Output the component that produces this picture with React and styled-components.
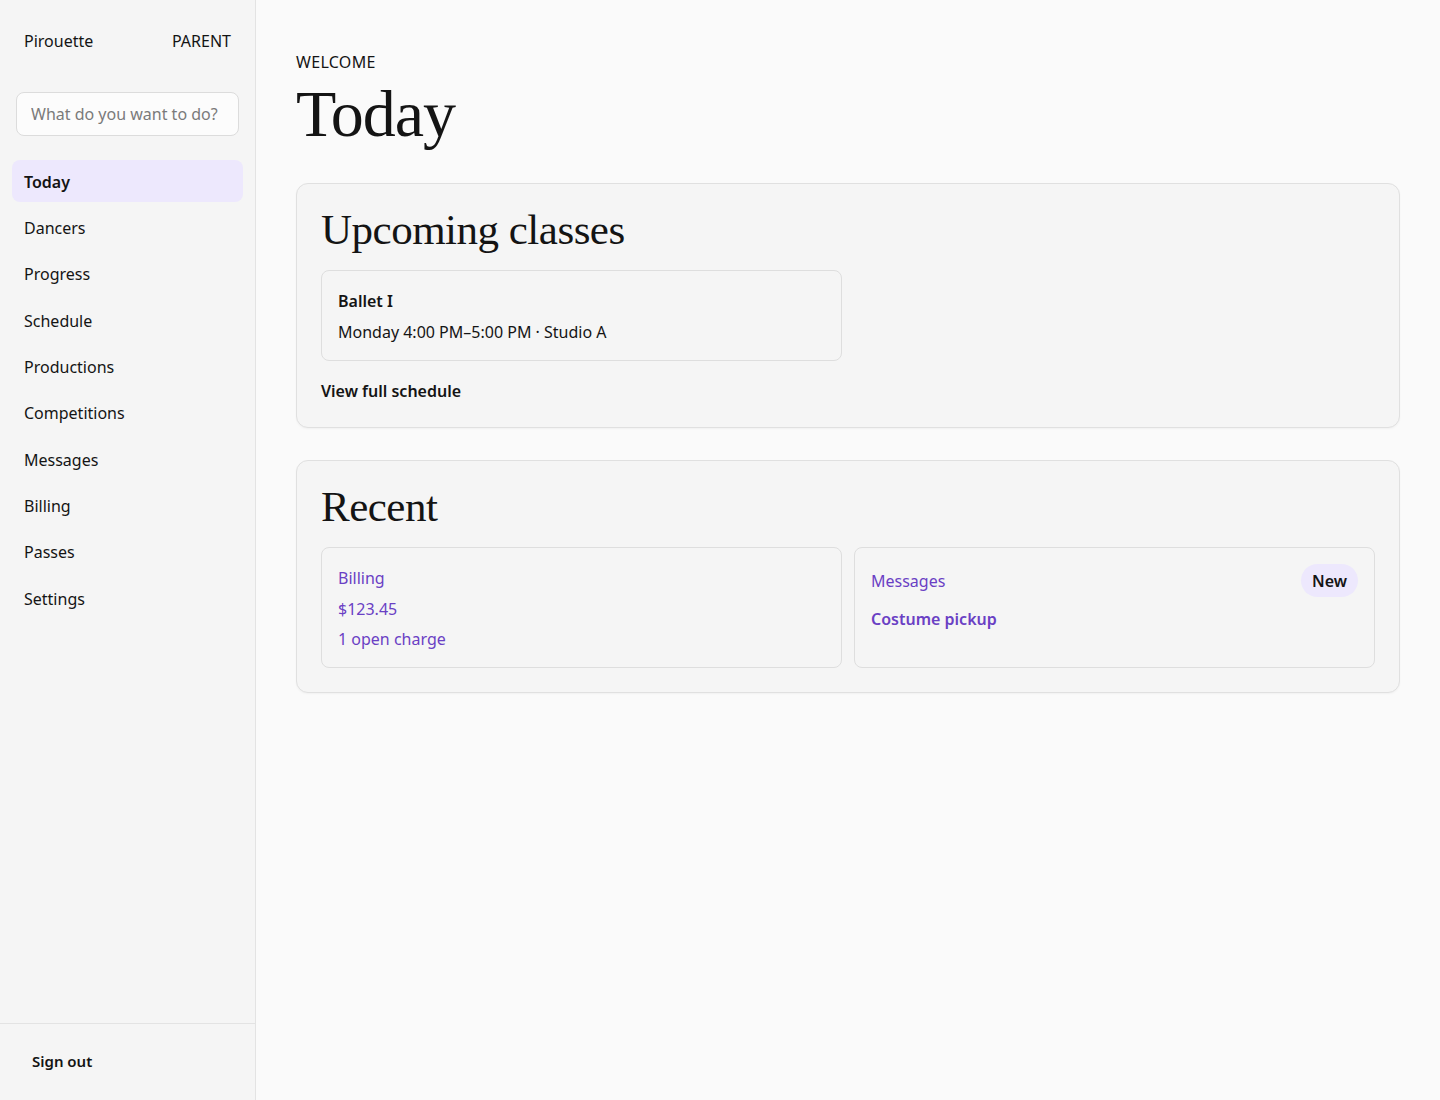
import React from "react";
import styled, { createGlobalStyle } from "styled-components";

const Global = createGlobalStyle`
  html, body { margin: 0; padding: 0; }
  body {
    font-family: "Noto Sans", "Open Sans", sans-serif;
    color: #141414;
    background: #fafafa;
  }
  * { box-sizing: border-box; }
`;

const Shell = styled.div`
  display: flex;
  min-height: 1100px;
`;

const Sidebar = styled.aside`
  width: 256px;
  flex-shrink: 0;
  background: #f5f5f5;
  border-right: 1px solid #e3e3e3;
  display: flex;
  flex-direction: column;
`;

const SideTop = styled.div`
  flex: 1;
  padding: 29px 12px 0;
`;

const Brand = styled.div`
  display: flex;
  justify-content: space-between;
  align-items: center;
  padding: 0 12px;
  font-size: 16px;
  line-height: 24px;
`;

const Search = styled.input`
  display: block;
  width: 223px;
  height: 44px;
  margin: 39px 0 24px 4px;
  padding: 0 14px;
  border: 1px solid #dcdcdc;
  border-radius: 8px;
  background: #fcfcfc;
  font-family: inherit;
  font-size: 16px;
  color: #141414;
  &::placeholder { color: #7a7a7a; }
`;

const Nav = styled.nav`
  display: flex;
  flex-direction: column;
  gap: 4px;
`;

const NavItem = styled.a`
  display: flex;
  align-items: center;
  height: 42.33px;
  padding: 1px 12px 0;
  border-radius: 8px;
  font-size: 16px;
  color: #141414;
  text-decoration: none;
  font-weight: ${(p) => (p.$active ? 600 : 400)};
  background: ${(p) => (p.$active ? "#ede8fd" : "transparent")};
`;

const SideFoot = styled.div`
  border-top: 1px solid #e3e3e3;
  padding: 26px 32px 28px;
  font-size: 15px;
  font-weight: 600;
  line-height: 22px;
`;

const Main = styled.main`
  flex: 1;
  padding: 50px 40px 40px;
`;

const Eyebrow = styled.div`
  font-size: 16px;
  letter-spacing: 0.3px;
  line-height: 24px;
`;

const Title = styled.h1`
  margin: 4px 0 33px;
  font-family: "Liberation Serif", "Times New Roman", serif;
  font-weight: 400;
  font-size: 66px;
  line-height: 72px;
  letter-spacing: -1px;
  color: #141414;
`;

const Card = styled.section`
  background: #f5f5f5;
  border: 1px solid #e0e0e0;
  border-radius: 12px;
  padding: 21px 24px 24px;
  margin-bottom: 32px;
  box-shadow: 0 1px 2px rgba(0, 0, 0, 0.04);
`;

const CardTitle = styled.h2`
  margin: 0 0 15px;
  font-family: "Liberation Serif", "Times New Roman", serif;
  font-weight: 400;
  font-size: 43px;
  line-height: 50px;
  letter-spacing: -0.5px;
  color: #141414;
`;

const Grid = styled.div`
  display: grid;
  grid-template-columns: 1fr 1fr;
  gap: 12px;
`;

const Tile = styled.div`
  border: 1px solid #dedede;
  border-radius: 8px;
  padding: ${(p) => p.$pad || "16px"};
  min-height: ${(p) => p.$h || "auto"};
  display: flex;
  flex-direction: column;
  gap: ${(p) => p.$gap || "6px"};
`;

const Strong = styled.div`
  font-weight: 600;
  font-size: 16px;
  line-height: 24px;
`;

const Text = styled.div`
  font-size: 16px;
  line-height: 24px;
  color: ${(p) => p.$color || "#141414"};
  font-weight: ${(p) => p.$w || 400};
`;

const LinkText = styled.a`
  display: inline-block;
  margin-top: 18px;
  font-size: 16px;
  font-weight: 600;
  line-height: 24px;
  color: #141414;
  text-decoration: none;
`;

const Row = styled.div`
  display: flex;
  justify-content: space-between;
  align-items: center;
`;

const Badge = styled.span`
  display: inline-flex;
  align-items: center;
  height: 33px;
  padding: 0 11px;
  border-radius: 999px;
  background: #ede8fd;
  font-weight: 600;
  font-size: 16px;
  color: #141414;
`;

const PURPLE = "#6a40c4";

const navItems = [
  "Today",
  "Dancers",
  "Progress",
  "Schedule",
  "Productions",
  "Competitions",
  "Messages",
  "Billing",
  "Passes",
  "Settings",
];

export default function App() {
  return (
    <>
      <Global />
      <Shell>
        <Sidebar>
          <SideTop>
            <Brand>
              <span>Pirouette</span>
              <span>PARENT</span>
            </Brand>
            <Search placeholder="What do you want to do?" />
            <Nav>
              {navItems.map((n) => (
                <NavItem key={n} $active={n === "Today"}>
                  {n}
                </NavItem>
              ))}
            </Nav>
          </SideTop>
          <SideFoot>Sign out</SideFoot>
        </Sidebar>
        <Main>
          <Eyebrow>WELCOME</Eyebrow>
          <Title>Today</Title>
          <Card>
            <CardTitle>Upcoming classes</CardTitle>
            <Grid>
              <Tile $gap="7px" $pad="18px 16px 16px">
                <Strong>Ballet I</Strong>
                <Text>Monday 4:00 PM–5:00 PM · Studio A</Text>
              </Tile>
            </Grid>
            <LinkText>View full schedule</LinkText>
          </Card>
          <Card>
            <CardTitle>Recent</CardTitle>
            <Grid>
              <Tile $gap="6.5px" $pad="18px 16px 16px" $h="120px">
                <Text $color={PURPLE}>Billing</Text>
                <Text $color={PURPLE}>$123.45</Text>
                <Text $color={PURPLE}>1 open charge</Text>
              </Tile>
              <Tile $gap="10px" $pad="16px" $h="120px">
                <Row>
                  <Text $color={PURPLE}>Messages</Text>
                  <Badge>New</Badge>
                </Row>
                <Text $color={PURPLE} $w={600}>
                  Costume pickup
                </Text>
              </Tile>
            </Grid>
          </Card>
        </Main>
      </Shell>
    </>
  );
}
